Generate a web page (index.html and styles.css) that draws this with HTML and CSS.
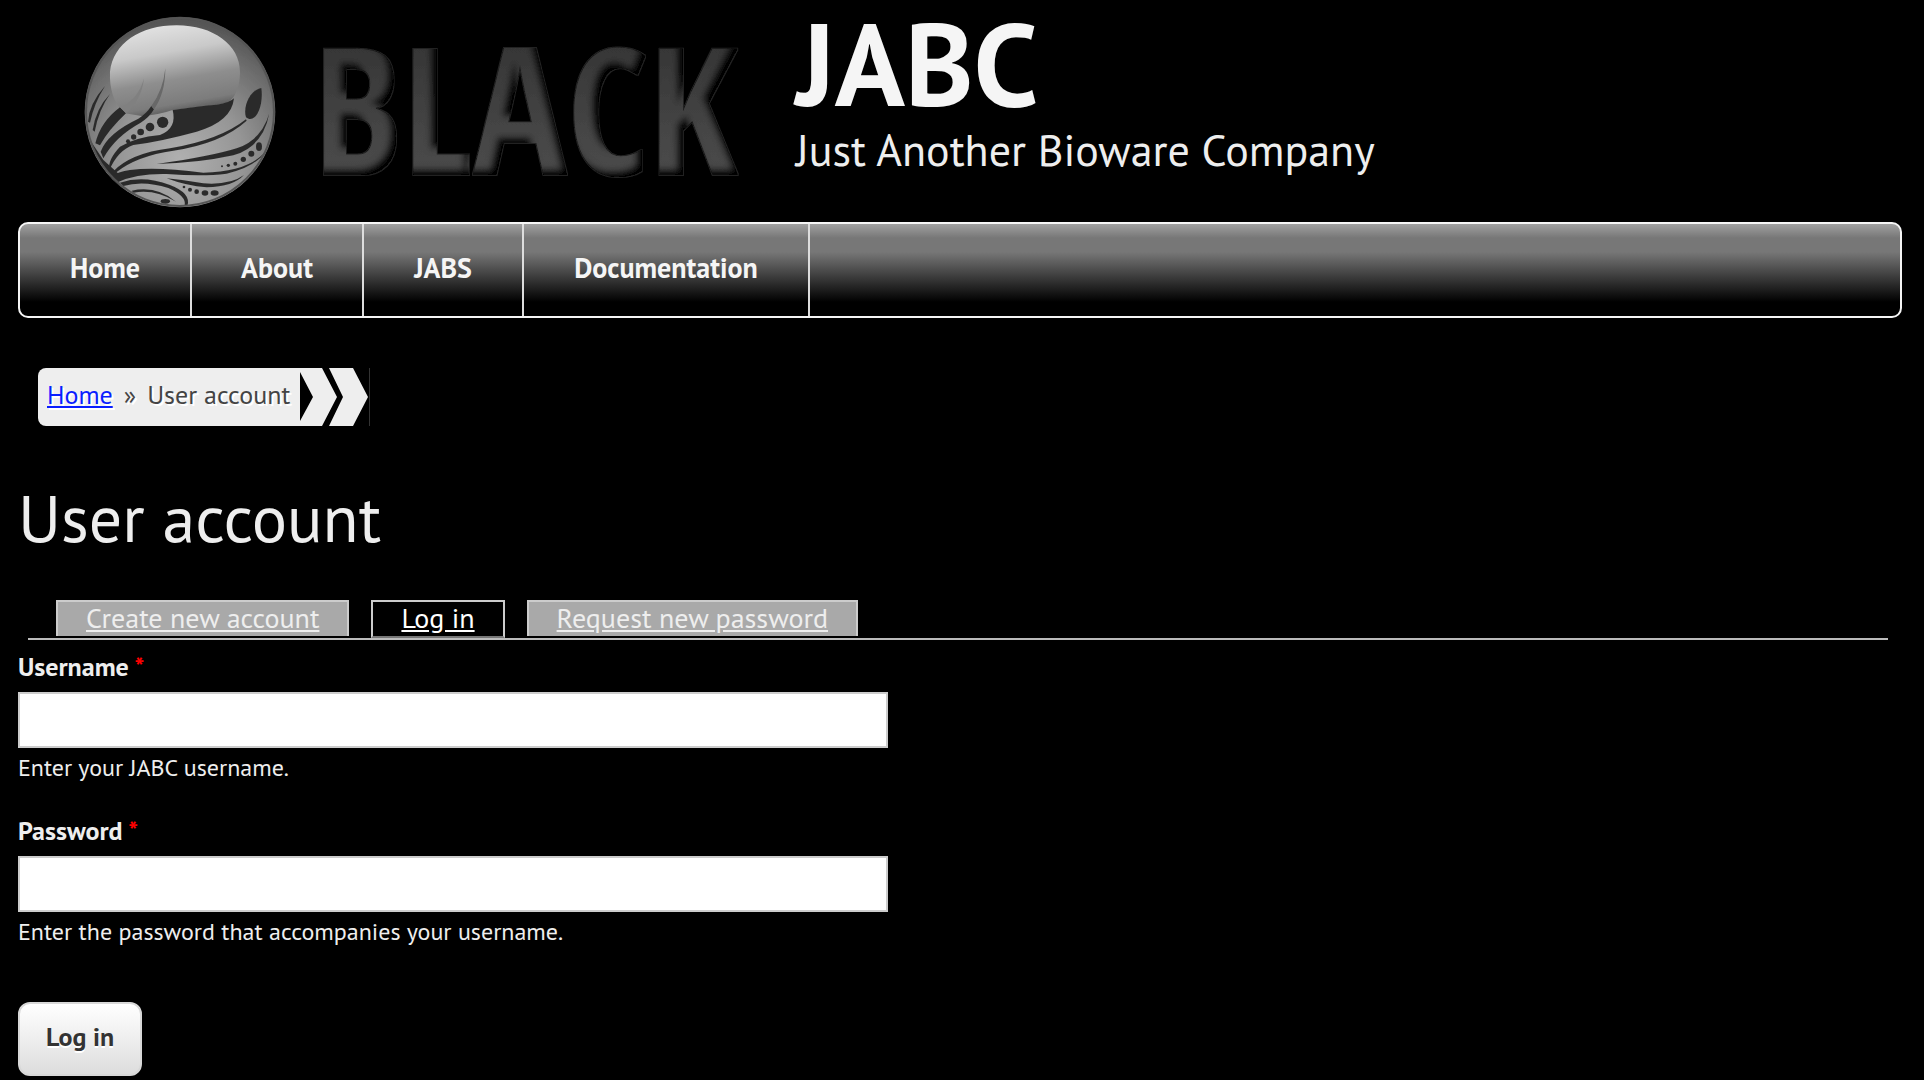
FILE: index.html
```html
<!DOCTYPE html>
<html lang="en">
<head>
<meta charset="utf-8">
<meta name="viewport" content="width=device-width, initial-scale=1">
<title>User account | JABC</title>
<link rel="stylesheet" href="styles.css">
</head>
<body>
<header class="site-header">
  <a class="logo" href="#" aria-label="Home">
    <svg class="logo-art" viewBox="0 0 700 220" width="700" height="220" aria-hidden="true">
      <defs>
        <radialGradient id="ball" cx="0.5" cy="0.75" r="0.75">
          <stop offset="0" stop-color="#b0b0b0"/>
          <stop offset="0.45" stop-color="#959595"/>
          <stop offset="0.8" stop-color="#6c6c6c"/>
          <stop offset="1" stop-color="#505050"/>
        </radialGradient>
        <linearGradient id="gloss" x1="0.35" y1="0" x2="0.6" y2="1">
          <stop offset="0" stop-color="#e2e2e2"/>
          <stop offset="0.3" stop-color="#c9c9c9"/>
          <stop offset="0.6" stop-color="#8e8e8e"/>
          <stop offset="0.85" stop-color="#7c7c7c"/>
          <stop offset="1" stop-color="#4c4c4c"/>
        </linearGradient>
        <linearGradient id="metal" x1="0" y1="0" x2="0" y2="1">
          <stop offset="0" stop-color="#2b2b2b"/>
          <stop offset="0.6" stop-color="#454545"/>
          <stop offset="1" stop-color="#505050"/>
        </linearGradient>
        <clipPath id="ballClip"><circle cx="330" cy="336" r="286"/></clipPath>
        <filter id="soft"><feGaussianBlur stdDeviation="2"/></filter>
        <filter id="bevel" x="-5%" y="-5%" width="110%" height="110%">
          <feMorphology in="SourceAlpha" operator="dilate" radius="1" result="wide"/>
          <feFlood flood-color="#222"/>
          <feComposite in2="wide" operator="in" result="rim"/>
          <feFlood flood-color="#000"/>
          <feComposite in2="SourceAlpha" operator="in" result="base"/>
          <feOffset in="SourceAlpha" dx="-6" dy="-6"/>
          <feGaussianBlur stdDeviation="3" result="shift"/>
          <feComposite in="SourceGraphic" in2="shift" operator="in" result="face"/>
          <feMerge>
            <feMergeNode in="rim"/><feMergeNode in="base"/><feMergeNode in="face"/>
          </feMerge>
        </filter>
      </defs>
      <g transform="scale(0.3333)" filter="url(#soft)">
        <circle cx="330" cy="336" r="286" fill="url(#ball)"/>
        <path d="M120 215C118 265 130 310 165 340L215 348Q265 345 308 330C400 318 440 318 470 308C500 295 510 250 510 215C510 135 430 76 320 76C210 76 130 130 120 215Z" fill="url(#gloss)"/>
        <g clip-path="url(#ballClip)" fill="#2c2c2c">
          <path d="M105 258Q58 310 54 365L60 368Q72 310 105 258Z"/>
          <path d="M120 282Q78 325 68 390L74 395Q86 330 120 282Z"/>
          <path d="M150 322Q92 365 76 430L90 436Q115 390 168 340Z"/>
          <path d="M244 318Q228 342 205 356Q112 400 92 455L100 475Q135 410 212 368Q238 352 252 328Z"/>
          <path d="M308 330Q390 318 440 314Q480 308 492 295Q485 365 380 395Q270 425 190 435Q145 450 118 510Q112 480 150 440Q195 412 270 405Q322 385 308 330Z"/>
          <path d="M528 358Q450 420 300 445Q180 460 128 516L140 516Q200 468 310 452Q455 430 530 362Z"/>
          <path d="M574 264C540 270 518 320 528 352C555 375 582 320 574 264Z"/>
          <path d="M598 340Q575 420 500 445Q420 470 260 492Q380 490 490 466Q580 440 598 340Z"/>
          <path d="M590 450Q540 515 400 518Q260 500 180 510Q145 515 120 530L145 546Q200 520 290 522Q400 530 470 521Q560 500 590 450Z"/>
          <path d="M522 525Q480 556 400 550Q345 540 290 535Q350 558 410 562Q490 560 522 525Z"/>
          <path d="M150 548Q220 525 300 555Q365 580 352 618L344 616Q350 588 295 564Q220 540 160 558Z"/>
          <path d="M185 572Q260 556 318 605Q255 566 190 578Z"/>
          <path d="M60 420Q85 500 150 560L185 590L140 545L150 525L100 480Z"/>
          <ellipse cx="286" cy="604" rx="14" ry="7"/>
          <circle cx="174" cy="424" r="6"/><circle cx="191" cy="411" r="8"/>
          <circle cx="212" cy="396" r="10"/><circle cx="240" cy="381" r="13"/>
          <circle cx="278" cy="367" r="17"/>
          <circle cx="456" cy="499" r="3"/><circle cx="475" cy="496" r="5"/>
          <circle cx="496" cy="491" r="6"/><circle cx="520" cy="478" r="8"/>
          <circle cx="544" cy="461" r="9"/><ellipse cx="567" cy="440" rx="9" ry="13"/>
          <circle cx="342" cy="561" r="4"/><circle cx="360" cy="569" r="6"/>
          <circle cx="380" cy="575" r="7"/><ellipse cx="405" cy="579" rx="10" ry="8"/>
          <ellipse cx="434" cy="579" rx="12" ry="8"/>
        </g>
        <path d="M222 235Q205 300 150 322L168 340Q215 300 222 235Z" fill="#808080"/>
        <path d="M286 205Q280 270 244 318L252 328Q286 280 286 205Z" fill="#686868"/>
        <circle cx="330" cy="336" r="282" fill="none" stroke="#555" stroke-width="6"/>
      </g>
      <text class="logo-word" x="243" y="175" filter="url(#bevel)" fill="url(#metal)">BLACK</text>
    </svg>
  </a>
  <div class="site-id">
    <p class="site-name">JABC</p>
    <p class="site-slogan">Just Another Bioware Company</p>
  </div>
</header>

<nav class="main-nav" aria-label="Main menu">
  <a href="#">Home</a>
  <a href="#">About</a>
  <a href="#">JABS</a>
  <a href="#">Documentation</a>
</nav>

<main class="content">
  <nav class="breadcrumb" aria-label="Breadcrumb">
    <div class="crumbs"><a href="#">Home</a><span>»</span><span>User account</span></div>
    <svg class="crumb-arrows" viewBox="0 0 70 58" width="70" height="58" aria-hidden="true">
      <path fill="#eee" d="M0 0H22L37 29L22 58H0V53L13 29L0 4ZM29 0H53L68 29L53 58H29L43 29Z"/>
      <path fill="#333" d="M69 0H70V58H69Z"/>
    </svg>
  </nav>

  <h1 class="page-title">User account</h1>

  <ul class="tabs">
    <li><a href="#">Create new account</a></li>
    <li class="active"><a href="#">Log in</a></li>
    <li><a href="#">Request new password</a></li>
  </ul>

  <form class="login-form" action="#">
    <div class="field">
      <label for="name">Username <span class="required">*</span></label>
      <input id="name" type="text" aria-describedby="name-help">
      <p class="help" id="name-help">Enter your JABC username.</p>
    </div>
    <div class="field">
      <label for="pass">Password <span class="required">*</span></label>
      <input id="pass" type="password" aria-describedby="pass-help">
      <p class="help" id="pass-help">Enter the password that accompanies your username.</p>
    </div>
    <button class="submit" type="submit">Log in</button>
  </form>
</main>
</body>
</html>
```
FILE: styles.css
```css
* {
  box-sizing: border-box;
}

body {
  margin: 0;
  background: #000;
  color: #eee;
  font-family: "PT Sans", Lato, "Noto Sans", sans-serif;
  font-size: 26px;
  line-height: 32px;
}

p, h1, ul {
  margin: 0;
  padding: 0;
}

.site-header {
  display: flex;
  align-items: flex-start;
  gap: 26px;
  padding-left: 70px;
}

.logo,
.logo-art {
  display: block;
}

.logo-art {
  overflow: visible;
}

.logo-word {
  font-family: "Noto Sans ExtraCondensed", "Open Sans Condensed", "Liberation Sans Narrow", sans-serif;
  font-size: 176px;
  font-weight: 700;
}

.site-name {
  color: #f5f5f5;
  font-size: 116px;
  font-weight: 700;
  line-height: 126px;
}

.site-slogan {
  font-size: 44px;
  line-height: 48px;
}

.main-nav {
  display: grid;
  grid-template-columns: 172px 172px 160px 286px;
  height: 96px;
  margin: 2px 22px 0 18px;
  border: 2px solid #f5f5f5;
  border-radius: 10px;
  background: linear-gradient(#a0a0a0 0, #777 14px, #777 28px, #000 78px);
}

.main-nav a {
  display: flex;
  align-items: center;
  justify-content: center;
  padding-bottom: 4px;
  border-right: 2px solid #ddd;
  color: #f5f5f5;
  font-size: 28px;
  font-weight: 700;
  text-decoration: none;
}

.content {
  padding: 50px 36px 0 18px;
}

.breadcrumb {
  display: flex;
  margin-left: 20px;
}

.crumbs {
  display: flex;
  align-items: center;
  gap: 11px;
  height: 58px;
  padding: 0 10px 4px 9px;
  border-radius: 8px 0 0 8px;
  background: #eee;
  color: #444;
  text-shadow: 2px 2px 0 #fff;
}

.crumbs a {
  color: #0a1eff;
}

.page-title {
  padding-top: 54px;
  font-size: 66px;
  font-weight: 400;
  line-height: 76px;
}

.tabs {
  display: flex;
  align-items: flex-start;
  gap: 22px;
  margin: 44px 0 0 10px;
  padding-left: 28px;
  border-bottom: 2px solid #bbb;
  list-style: none;
  font-size: 28px;
}

.tabs li {
  height: 36px;
  margin-bottom: 2px;
  padding: 0 28px;
  border: 2px solid #ccc;
  border-bottom: 0;
  background: #a9a9a9;
}

.tabs .active {
  height: 38px;
  margin-bottom: 0;
  border-bottom: 2px solid #777;
  background: #000;
}

.tabs a {
  color: #eee;
}

.tabs .active a {
  color: #fff;
}

.field {
  padding-top: 11px;
  margin-bottom: 20px;
}

.field label {
  display: block;
  margin-bottom: 9px;
  font-weight: 700;
}

.required {
  color: #f00;
}

.field input {
  display: block;
  width: 870px;
  max-width: 100%;
  height: 56px;
  border: 2px solid #ccc;
  background: #fff;
  font: inherit;
}

.help {
  padding-top: 4px;
  font-size: 24px;
}

.submit {
  display: block;
  height: 74px;
  margin-top: 54px;
  padding: 0 26px 4px;
  border: 2px solid #d8d8d8;
  border-radius: 12px;
  background: linear-gradient(#fff, #ddd);
  color: #333;
  font: inherit;
  font-weight: 700;
  text-shadow: 0 2px 0 #fff;
}
```
